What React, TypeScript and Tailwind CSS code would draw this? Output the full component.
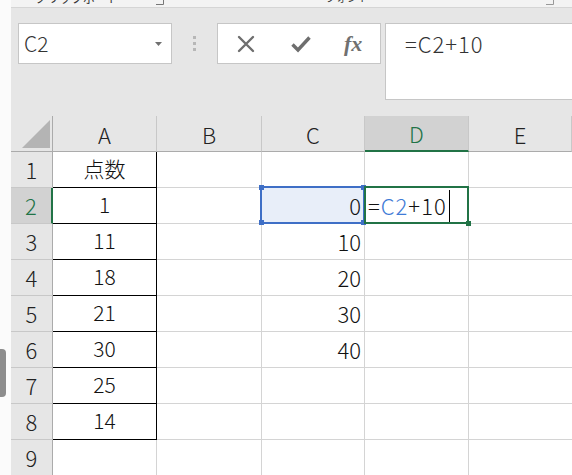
import React from "react";

const FONT = { fontFamily: '"Noto Sans CJK JP", "Noto Sans", sans-serif' };

const colLetters = ["A", "B", "C", "D", "E"];
const aVals = ["点数", "1", "11", "18", "21", "30", "25", "14", ""];
const cVals = ["", "0", "10", "20", "30", "40", "", "", ""];

function Corner() {
  return (
    <div className="relative border-r border-b border-r-[#ababab] border-b-[#ababab] bg-[#e6e6e6] flex items-end justify-end pr-[2px] pb-[3px]">
      <svg width="28" height="28" viewBox="0 0 28 28">
        <polygon points="28,0 28,28 0,28" fill="#b4b4b4" />
      </svg>
    </div>
  );
}

function Handle({ className }: { className: string }) {
  return <div className={"absolute w-[5px] h-[5px] " + className} />;
}

export default function App() {
  return (
    <div
      className="flex w-[572px] h-[475px] overflow-hidden bg-[#fbfbfb] text-[#111] font-light"
      style={FONT}
    >
      {/* left strip with scroll thumb */}
      <div className="w-[11px] shrink-0 flex flex-col">
        <div className="mt-[349px] h-[48px] w-[6px] rounded-r-[4px] bg-[#8d8d8d]" />
      </div>

      <div className="flex-1 flex flex-col min-w-0">
        {/* cut-off ribbon group labels */}
        <div className="h-[8px] shrink-0 bg-[#f3f3f3] border-b border-[#d5d5d5] overflow-hidden flex items-start text-[12px] leading-none text-[#333] font-normal">
          <span className="ml-[24px] -mt-[8px] whitespace-nowrap">クリップボード</span>
          <svg className="ml-[36px]" width="10" height="5" viewBox="0 0 10 5">
            <path d="M1 4.5 H8.5 V0" stroke="#777" strokeWidth="1" fill="none" />
          </svg>
          <span className="ml-[160px] -mt-[8px] whitespace-nowrap text-[11px]">フォント</span>
          <svg className="ml-[176px]" width="10" height="5" viewBox="0 0 10 5">
            <path d="M1 4.5 H8.5 V0" stroke="#999" strokeWidth="1" fill="none" />
          </svg>
        </div>

        {/* formula bar area */}
        <div className="h-[108px] shrink-0 bg-[#e6e6e6] flex items-start pt-[15px] pl-[7px]">
          <div className="w-[154px] h-[41px] bg-white border border-[#c6c6c6] flex items-center pl-[5px] pr-[9px]">
            <span className="flex-1 text-[21px] text-[#333] leading-none">C2</span>
            <svg width="7" height="4" viewBox="0 0 7 4">
              <polygon points="0,0 7,0 3.5,4" fill="#707070" />
            </svg>
          </div>
          <div className="w-[45px] h-[41px] flex flex-col items-center justify-center gap-[3px]">
            <div className="w-[3px] h-[3px] bg-[#b7b7b7]" />
            <div className="w-[3px] h-[3px] bg-[#b7b7b7]" />
            <div className="w-[3px] h-[3px] bg-[#b7b7b7]" />
          </div>
          <div className="w-[164px] h-[41px] bg-white border border-[#c6c6c6] flex items-center pl-[19px]">
            <svg width="18" height="18" viewBox="0 0 18 18">
              <path d="M2 2 L16 16 M16 2 L2 16" stroke="#6e6e6e" strokeWidth="2.4" strokeLinecap="round" />
            </svg>
            <svg className="ml-[36px]" width="20" height="18" viewBox="0 0 20 18">
              <path d="M1.5 9.5 L7 15 L18.5 2.5" stroke="#6e6e6e" strokeWidth="3.4" fill="none" strokeLinejoin="miter" />
            </svg>
            <span
              className="ml-[33px] text-[22px] italic font-semibold text-[#707070] leading-none"
              style={{ fontFamily: '"Liberation Serif", "DejaVu Serif", serif' }}
            >
              fx
            </span>
          </div>
          <div className="ml-[4px] flex-1 h-[77px] bg-white border border-[#c6c6c6] border-r-0 pl-[19px] pt-[8px]">
            <span className="text-[22px] tracking-[1px] text-[#333] leading-none">=C2+10</span>
          </div>
        </div>

        {/* grid */}
        <div className="grid grid-cols-[42px_104px_105px_103px_104px_1fr] grid-rows-[36px_repeat(9,36px)] bg-white text-[22px] leading-none">
          <Corner />
          {colLetters.map((l) =>
            l === "D" ? (
              <div
                key={l}
                className="bg-[#d2d2d2] border-r border-r-[#c8c8c8] border-b-2 border-b-[#217346] flex items-center justify-center text-[#217346]"
              >
                {l}
              </div>
            ) : (
              <div
                key={l}
                className="bg-[#e6e6e6] border-r border-r-[#c8c8c8] border-b border-b-[#ababab] flex items-center justify-center text-[#222]"
              >
                {l}
              </div>
            )
          )}
          {aVals.map((a, i) => {
            const row = i + 1;
            const sel = row === 2;
            return (
              <React.Fragment key={row}>
                <div
                  className={
                    sel
                      ? "bg-[#d2d2d2] border-r-2 border-r-[#217346] border-b border-b-[#c8c8c8] flex items-center justify-center pb-[2px] text-[#217346]"
                      : "bg-[#e6e6e6] border-r border-r-[#ababab] border-b border-b-[#c8c8c8] flex items-center justify-center pb-[2px] text-[#222]"
                  }
                >
                  {row}
                </div>
                <div
                  className={
                    row <= 8
                      ? "border-r border-b border-black flex items-center justify-center pb-[2px] text-[21px]"
                      : "border-r border-b border-[#d4d4d4]"
                  }
                >
                  {a}
                </div>
                <div className="border-r border-b border-[#d4d4d4]" />
                {sel ? (
                  <div className="relative border-r border-b border-[#d4d4d4] bg-[#e8eef9] flex items-center justify-end pr-[3px] pb-[2px]">
                    0
                    <div className="absolute -left-[2px] -top-[2px] -right-[1px] -bottom-[1px] border-2 border-[#3f6fc6]" />
                    <Handle className="-left-[3px] -top-[3px] bg-[#3f6fc6]" />
                    <Handle className="-right-[2px] -top-[3px] bg-[#3f6fc6]" />
                    <Handle className="-left-[3px] -bottom-[2px] bg-[#3f6fc6]" />
                    <Handle className="-right-[2px] -bottom-[2px] bg-[#3f6fc6]" />
                  </div>
                ) : (
                  <div className="border-r border-b border-[#d4d4d4] flex items-center justify-end pr-[3px] pb-[2px]">
                    {cVals[i]}
                  </div>
                )}
                {sel ? (
                  <div className="relative border-r border-b border-[#d4d4d4] flex items-center pl-[3px] tracking-[1px]">
                    <span className="pb-[2px]">=</span>
                    <span className="pb-[2px] text-[#3f7bd6]">C2</span>
                    <span className="pb-[2px]">+10</span>
                    <span className="ml-[2px] w-[1px] h-[32px] bg-black" />
                    <div className="absolute -left-[1px] -top-[2px] -right-[1px] -bottom-[1px] border-2 border-[#217346]" />
                    <Handle className="-right-[3px] -bottom-[3px] bg-[#217346]" />
                  </div>
                ) : (
                  <div className="border-r border-b border-[#d4d4d4]" />
                )}
                <div className="border-b border-[#d4d4d4]" />
              </React.Fragment>
            );
          })}
        </div>
      </div>
    </div>
  );
}
